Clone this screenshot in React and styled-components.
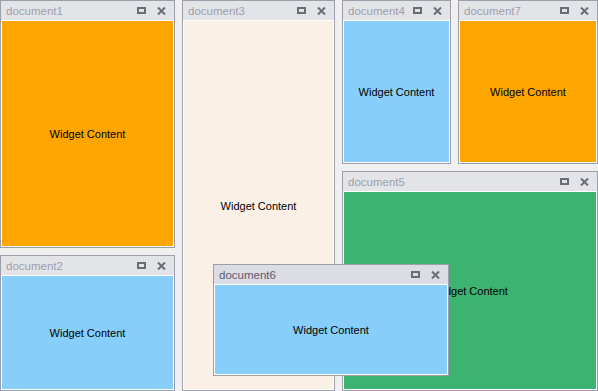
import React from 'react'
import styled, { createGlobalStyle } from 'styled-components'

const GlobalStyle = createGlobalStyle`
    html, body {
        margin: 0;
        padding: 0;
        background: #f0f0f0;
        font-family: "Liberation Sans", Arial, sans-serif;
    }
`

const Layout = styled.div`
    position: relative;
    width: 598px;
    height: 391px;
    display: grid;
    grid-template-columns: 175px 153px 256px;
    column-gap: 7px;
    overflow: hidden;
`

const Column = styled.div`
    display: flex;
    flex-direction: column;
    gap: 7px;
    min-height: 0;
`

const Row = styled.div`
    display: flex;
    gap: 7px;
    height: ${props => props.height}px;
    flex-shrink: 0;
`

const Panel = styled.div`
    box-sizing: border-box;
    display: flex;
    flex-direction: column;
    border: 1px solid #9d9eab;
    background: #e3e4e8;
    flex: ${props => props.grow ? '1 1 0' : 'none'};
    height: ${props => props.height ? `${props.height}px` : 'auto'};
    width: ${props => props.width ? `${props.width}px` : 'auto'};
    min-height: 0;
`

const Floating = styled(Panel)`
    position: absolute;
    left: 213px;
    top: 264px;
    width: 236px;
    height: 112px;
    background: #dcdde2;
`

const Header = styled.div`
    height: 19px;
    flex-shrink: 0;
    display: flex;
    align-items: center;
    padding: 0 8px 0 5px;
    font-size: 11.5px;
    color: ${props => props.active ? '#5b5b6e' : '#9d9eae'};
`

const Title = styled.span`
    flex: 1;
    line-height: 19px;
    padding-top: 1px;
`

const Tools = styled.div`
    display: flex;
    align-items: center;
    gap: 11px;
`

const Content = styled.div`
    flex: 1;
    display: flex;
    align-items: center;
    justify-content: center;
    border: 1px solid #ffffff;
    background: ${props => props.color};
    font-size: 11px;
    padding-top: 1px;
    color: #000;
`

const MaxIcon = () => (
    <svg width="9" height="7" viewBox="0 0 9 7">
        <path d="M0 0 H9 V7 H0 Z M2 2 V5 H7 V2 Z" fill="#6b6b78" fillRule="evenodd" />
    </svg>
)

const CloseIcon = () => (
    <svg width="9" height="8" viewBox="0 0 9 8">
        <path d="M1 0.5 L8 7.5 M8 0.5 L1 7.5" stroke="#6b6b78" strokeWidth="2" />
    </svg>
)

const Doc = ({ title, color, active, as: Wrap = Panel, ...rest }) => (
    <Wrap {...rest}>
        <Header active={active}>
            <Title>{title}</Title>
            <Tools>
                <MaxIcon />
                <CloseIcon />
            </Tools>
        </Header>
        <Content color={color}>Widget Content</Content>
    </Wrap>
)

export default function App() {
    return (
        <>
            <GlobalStyle />
            <Layout>
                <Column>
                    <Doc title="document1" color="#ffa500" height={248} />
                    <Doc title="document2" color="#87cefa" grow />
                </Column>
                <Column>
                    <Doc title="document3" color="#faf0e6" grow />
                </Column>
                <Column>
                    <Row height={164}>
                        <Doc title="document4" color="#87cefa" width={109} />
                        <Doc title="document7" color="#ffa500" grow />
                    </Row>
                    <Doc title="document5" color="#3cb371" grow />
                </Column>
                <Doc title="document6" color="#87cefa" active as={Floating} />
            </Layout>
        </>
    )
}
